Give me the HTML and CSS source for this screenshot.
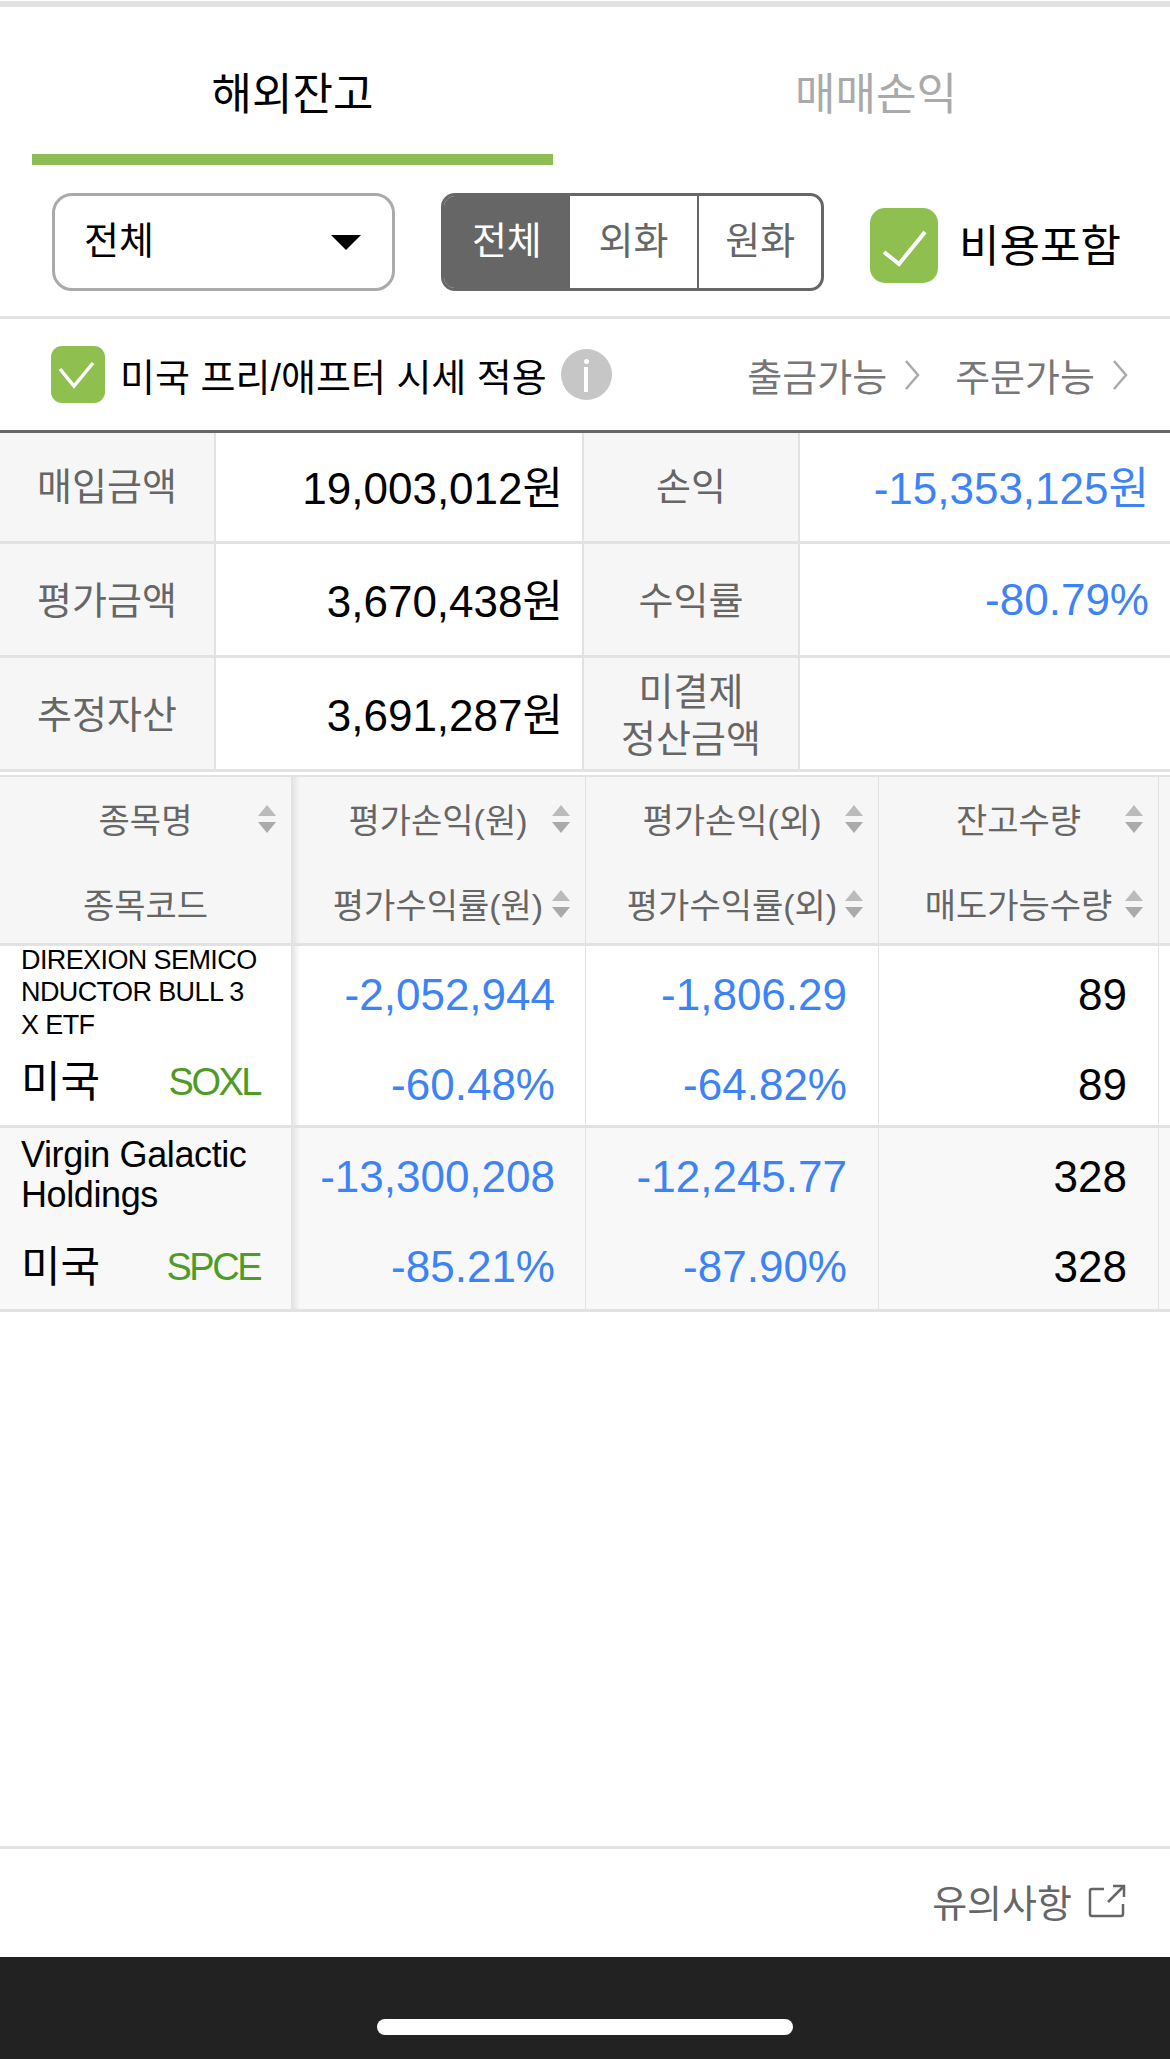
FILE: index.html
```html
<!DOCTYPE html>
<html lang="ko">
<head>
    <meta charset="UTF-8">
    <meta name="viewport" content="width=device-width, initial-scale=1.0">
    <title>해외잔고</title>
    <link rel="stylesheet" href="styles.css">
</head>
<body>
    <div class="page">
        <div class="top-strip"></div>

        <!-- 탭 -->
        <nav class="tabs">
            <a class="tab active">해외잔고</a>
            <a class="tab">매매손익</a>
        </nav>

        <!-- 필터 -->
        <div class="filters">
            <div class="select">
                <span class="select-text">전체</span>
                <i class="caret"></i>
            </div>
            <div class="segments">
                <span class="segment on">전체</span>
                <span class="segment">외화</span>
                <span class="segment">원화</span>
            </div>
            <label class="cost-check">
                <span class="checkbox big">
                    <svg width="68" height="75" viewBox="0 0 68 75"><path d="M14 44 L29 56 L55 24" fill="none" stroke="#fff" stroke-width="4"/></svg>
                </span>
                <span class="cost-text">비용포함</span>
            </label>
        </div>

        <div class="options">
            <span class="checkbox small">
                <svg width="54" height="57" viewBox="0 0 54 57"><path d="M9 23 L23 40 L42 17" fill="none" stroke="#fff" stroke-width="3.5"/></svg>
            </span>
            <span class="option-label">미국 프리/애프터 시세 적용</span>
            <span class="info"><i class="info-dot"></i><i class="info-stem"></i></span>
            <div class="links">
                <a class="link">출금가능
                    <svg width="16" height="32" viewBox="0 0 16 32"><path d="M2 2 L14 16 L2 30" fill="none" stroke="#aaa" stroke-width="2.5"/></svg>
                </a>
                <a class="link">주문가능
                    <svg width="16" height="32" viewBox="0 0 16 32"><path d="M2 2 L14 16 L2 30" fill="none" stroke="#aaa" stroke-width="2.5"/></svg>
                </a>
            </div>
        </div>

        <!-- 요약 -->
        <section class="summary">
            <div class="summary-row">
                <div class="s-label">매입금액</div>
                <div class="s-value">19,003,012원</div>
                <div class="s-label">손익</div>
                <div class="s-value blue">-15,353,125원</div>
            </div>
            <div class="summary-row">
                <div class="s-label">평가금액</div>
                <div class="s-value">3,670,438원</div>
                <div class="s-label">수익률</div>
                <div class="s-value blue pct">-80.79%</div>
            </div>
            <div class="summary-row">
                <div class="s-label">추정자산</div>
                <div class="s-value">3,691,287원</div>
                <div class="s-label">미결제<br>정산금액</div>
                <div class="s-value"></div>
            </div>
        </section>

        <!-- 종목 목록 -->
        <section class="list">
            <div class="list-row head">
                <div class="cell first">
                    <div class="head-line">종목명<svg class="sort" width="20" height="28" viewBox="0 0 20 28"><path d="M10 0 L19 11 H1 Z" fill="#bbb"/><path d="M1 17 H19 L10 28 Z" fill="#aaa"/></svg></div>
                    <div class="head-line">종목코드</div>
                </div>
                <div class="cell">
                    <div class="head-line">평가손익(원)<svg class="sort" width="20" height="28" viewBox="0 0 20 28"><path d="M10 0 L19 11 H1 Z" fill="#bbb"/><path d="M1 17 H19 L10 28 Z" fill="#aaa"/></svg></div>
                    <div class="head-line">평가수익률(원)<svg class="sort" width="20" height="28" viewBox="0 0 20 28"><path d="M10 0 L19 11 H1 Z" fill="#bbb"/><path d="M1 17 H19 L10 28 Z" fill="#aaa"/></svg></div>
                </div>
                <div class="cell">
                    <div class="head-line">평가손익(외)<svg class="sort" width="20" height="28" viewBox="0 0 20 28"><path d="M10 0 L19 11 H1 Z" fill="#bbb"/><path d="M1 17 H19 L10 28 Z" fill="#aaa"/></svg></div>
                    <div class="head-line">평가수익률(외)<svg class="sort" width="20" height="28" viewBox="0 0 20 28"><path d="M10 0 L19 11 H1 Z" fill="#bbb"/><path d="M1 17 H19 L10 28 Z" fill="#aaa"/></svg></div>
                </div>
                <div class="cell">
                    <div class="head-line">잔고수량<svg class="sort" width="20" height="28" viewBox="0 0 20 28"><path d="M10 0 L19 11 H1 Z" fill="#bbb"/><path d="M1 17 H19 L10 28 Z" fill="#aaa"/></svg></div>
                    <div class="head-line">매도가능수량<svg class="sort" width="20" height="28" viewBox="0 0 20 28"><path d="M10 0 L19 11 H1 Z" fill="#bbb"/><path d="M1 17 H19 L10 28 Z" fill="#aaa"/></svg></div>
                </div>
                <div class="cell"></div>
            </div>

            <div class="list-row item">
                <div class="cell first name-cell">
                    <div class="name caps">DIREXION SEMICO<br>NDUCTOR BULL 3<br>X ETF</div>
                    <div class="market"><span>미국</span><span class="code">SOXL</span></div>
                </div>
                <div class="cell num">
                    <div class="blue">-2,052,944</div>
                    <div class="blue">-60.48%</div>
                </div>
                <div class="cell num">
                    <div class="blue">-1,806.29</div>
                    <div class="blue">-64.82%</div>
                </div>
                <div class="cell num">
                    <div>89</div>
                    <div>89</div>
                </div>
                <div class="cell"></div>
            </div>

            <div class="list-row item alt">
                <div class="cell first name-cell">
                    <div class="name">Virgin Galactic<br>Holdings</div>
                    <div class="market"><span>미국</span><span class="code">SPCE</span></div>
                </div>
                <div class="cell num">
                    <div class="blue">-13,300,208</div>
                    <div class="blue">-85.21%</div>
                </div>
                <div class="cell num">
                    <div class="blue">-12,245.77</div>
                    <div class="blue">-87.90%</div>
                </div>
                <div class="cell num">
                    <div>328</div>
                    <div>328</div>
                </div>
                <div class="cell"></div>
            </div>
        </section>

        <div class="spacer"></div>

        <div class="notice">
            <span class="notice-text">유의사항</span>
            <svg class="notice-icon" width="38" height="34" viewBox="0 0 38 34"><path d="M16 5 H4 Q2 5 2 7 V30 Q2 32 4 32 H33 Q35 32 35 30 V20 M20 18 L36 2 M25 2 H36 V13" fill="none" stroke="#666" stroke-width="2.5"/></svg>
        </div>
        <div class="home-bar"><i class="home-indicator"></i></div>
    </div>
</body>
</html>
```

FILE: styles.css
```css
* {
    box-sizing: border-box;
}
body {
    margin: 0;
    background: #fff;
    font-family: 'Liberation Sans', 'Noto Sans CJK KR', sans-serif;
    color: #000;
}
.page {
    width: 1170px;
    height: 2059px;
    display: flex;
    flex-direction: column;
    overflow: hidden;
}
.top-strip {
    height: 6px;
    margin-top: 1px;
    background: #e2e2e2;
    flex: none;
}
.blue {
    color: #3d83f5;
}

/* 탭 */
.tabs {
    display: grid;
    grid-template-columns: 521px 522px;
    column-gap: 62px;
    padding-left: 32px;
    height: 158px;
    flex: none;
}
.tab {
    display: flex;
    align-items: center;
    justify-content: center;
    padding: 32px 0 23px;
    font-size: 44px;
    color: #aaa;
}
.tab.active {
    color: #000;
    border-bottom: 11px solid #8fbc54;
    padding-bottom: 12px;
}

/* 필터 */
.filters {
    display: flex;
    align-items: flex-start;
    height: 154px;
    padding: 28px 0 0 52px;
    border-bottom: 3px solid #e2e2e2;
    flex: none;
}
.select {
    width: 343px;
    height: 98px;
    display: flex;
    align-items: center;
    justify-content: space-between;
    padding: 0 31px 0 29px;
    border: 3px solid #aaa;
    border-radius: 20px;
    font-size: 38px;
}
.select-text {
    padding-bottom: 9px;
}
.caret {
    width: 0;
    height: 0;
    border-left: 15px solid transparent;
    border-right: 15px solid transparent;
    border-top: 15px solid #000;
}
.segments {
    width: 383px;
    height: 98px;
    margin-left: 46px;
    display: flex;
    border: 3px solid #666;
    border-radius: 14px;
    overflow: hidden;
}
.segment {
    width: 124px;
    display: flex;
    align-items: center;
    justify-content: center;
    padding-bottom: 9px;
    font-size: 38px;
    color: #666;
}
.segment.on {
    width: 126px;
    background: #666;
    color: #fff;
}
.segment:nth-child(2) {
    width: 128px;
}
.segment:last-child {
    border-left: 2px solid #666;
}
.cost-check {
    display: flex;
    align-items: center;
    gap: 21px;
    margin: 15px 0 0 46px;
    font-size: 44px;
}
.cost-text {
    padding-bottom: 5px;
}
.checkbox {
    display: block;
    background: #8fc04f;
    flex: none;
}
.checkbox svg {
    display: block;
}
.checkbox.big {
    width: 68px;
    height: 75px;
    border-radius: 15px;
}
.checkbox.small {
    width: 54px;
    height: 57px;
    border-radius: 11px;
}

/* 옵션 줄 */
.options {
    display: flex;
    align-items: center;
    height: 114px;
    padding-left: 51px;
    border-bottom: 3px solid #666;
    flex: none;
}
.option-label {
    margin-left: 15px;
    font-size: 38px;
    white-space: nowrap;
}
.info {
    width: 51px;
    height: 51px;
    margin-left: 14px;
    border-radius: 50%;
    background: #c6c6c6;
    display: flex;
    flex-direction: column;
    align-items: center;
    padding-top: 10px;
    flex: none;
}
.info-dot {
    width: 5px;
    height: 5px;
    border-radius: 50%;
    background: #fff;
}
.info-stem {
    width: 4px;
    height: 25px;
    margin-top: 3px;
    background: #fff;
}
.links {
    margin-left: auto;
    padding-right: 42px;
    display: flex;
    gap: 35px;
}
.link {
    display: flex;
    align-items: center;
    gap: 17px;
    font-size: 38px;
    color: #777;
}

/* 요약 */
.summary {
    flex: none;
}
.summary-row {
    display: grid;
    grid-template-columns: 216px 368px 216px 370px;
    height: 114px;
    border-bottom: 3px solid #e2e2e2;
}
.summary-row:first-child {
    height: 111px;
}
.s-label,
.s-value {
    display: flex;
    align-items: center;
    border-right: 2px solid #e2e2e2;
}
.s-label {
    justify-content: center;
    text-align: center;
    padding-top: 4px;
    background: #f6f6f6;
    color: #666;
    font-size: 38px;
    line-height: 47px;
}
.summary-row:first-child .s-label {
    padding-top: 0;
}
.s-value {
    justify-content: flex-end;
    padding: 0 19px 4px 0;
    font-size: 44px;
}
.s-value:last-child {
    border-right: 0;
    padding-right: 21px;
}
.s-value.pct {
    padding-bottom: 0;
}

/* 종목 목록 */
.list {
    margin-top: 3px;
    border-top: 2px solid #e2e2e2;
    flex: none;
}
.list-row {
    display: grid;
    grid-template-columns: 291px 295px 293px 280px 11px;
    grid-template-rows: 100%;
    border-bottom: 3px solid #e2e2e2;
}
.list-row.head {
    height: 169px;
    background: #f6f6f6;
}
.list-row.item {
    height: 182px;
}
.list-row.item.alt {
    height: 184px;
    background: #f8f8f8;
}
.cell {
    border-right: 1px solid #e2e2e2;
    position: relative;
}
.cell:last-child {
    border-right: 0;
}
/* 고정 컬럼 그림자 */
.cell.first {
    border-right: 0;
}
.cell.first::after {
    content: "";
    position: absolute;
    top: 0;
    bottom: 0;
    left: 100%;
    width: 9px;
    background: linear-gradient(to right, #e0e0e0, rgba(230, 230, 230, 0));
}
.head-line {
    position: relative;
    height: 85px;
    display: flex;
    align-items: center;
    justify-content: center;
    padding-bottom: 2px;
    font-size: 34px;
    color: #666;
    white-space: nowrap;
}
.sort {
    position: absolute;
    right: 14px;
    top: 28px;
}
.name-cell {
    padding-left: 21px;
}
.name {
    height: 113px;
    display: flex;
    flex-direction: column;
    justify-content: center;
    padding-bottom: 20px;
    font-size: 36px;
    line-height: 40px;
    letter-spacing: -0.4px;
}
.name.caps {
    font-size: 27px;
    line-height: 32.5px;
    letter-spacing: -0.6px;
}
.market {
    display: flex;
    align-items: center;
    justify-content: space-between;
    padding-right: 31px;
    font-size: 43px;
    line-height: 46px;
}
.alt .market {
    margin-top: 3px;
}
.code {
    font-size: 38px;
    letter-spacing: -2.5px;
    color: #4f9c24;
}
.num {
    display: flex;
    flex-direction: column;
    padding: 17px 31px 0 0;
    font-size: 44px;
    text-align: right;
}
.num:nth-child(2) {
    padding-right: 30px;
}
.num div {
    line-height: 64px;
}
.num div:first-child {
    height: 90px;
}

.spacer {
    flex: 1;
}

/* 하단 */
.notice {
    height: 111px;
    border-top: 3px solid #e2e2e2;
    display: flex;
    align-items: center;
    justify-content: flex-end;
    gap: 16px;
    padding-right: 44px;
    font-size: 38px;
    color: #666;
    flex: none;
}
.notice-text {
    padding-bottom: 5px;
}
.notice-icon {
    margin-bottom: 5px;
}
.home-bar {
    height: 102px;
    background: #222;
    display: flex;
    justify-content: center;
    padding-top: 62px;
    flex: none;
}
.home-indicator {
    width: 416px;
    height: 16px;
    border-radius: 8px;
    background: #fff;
}
```
